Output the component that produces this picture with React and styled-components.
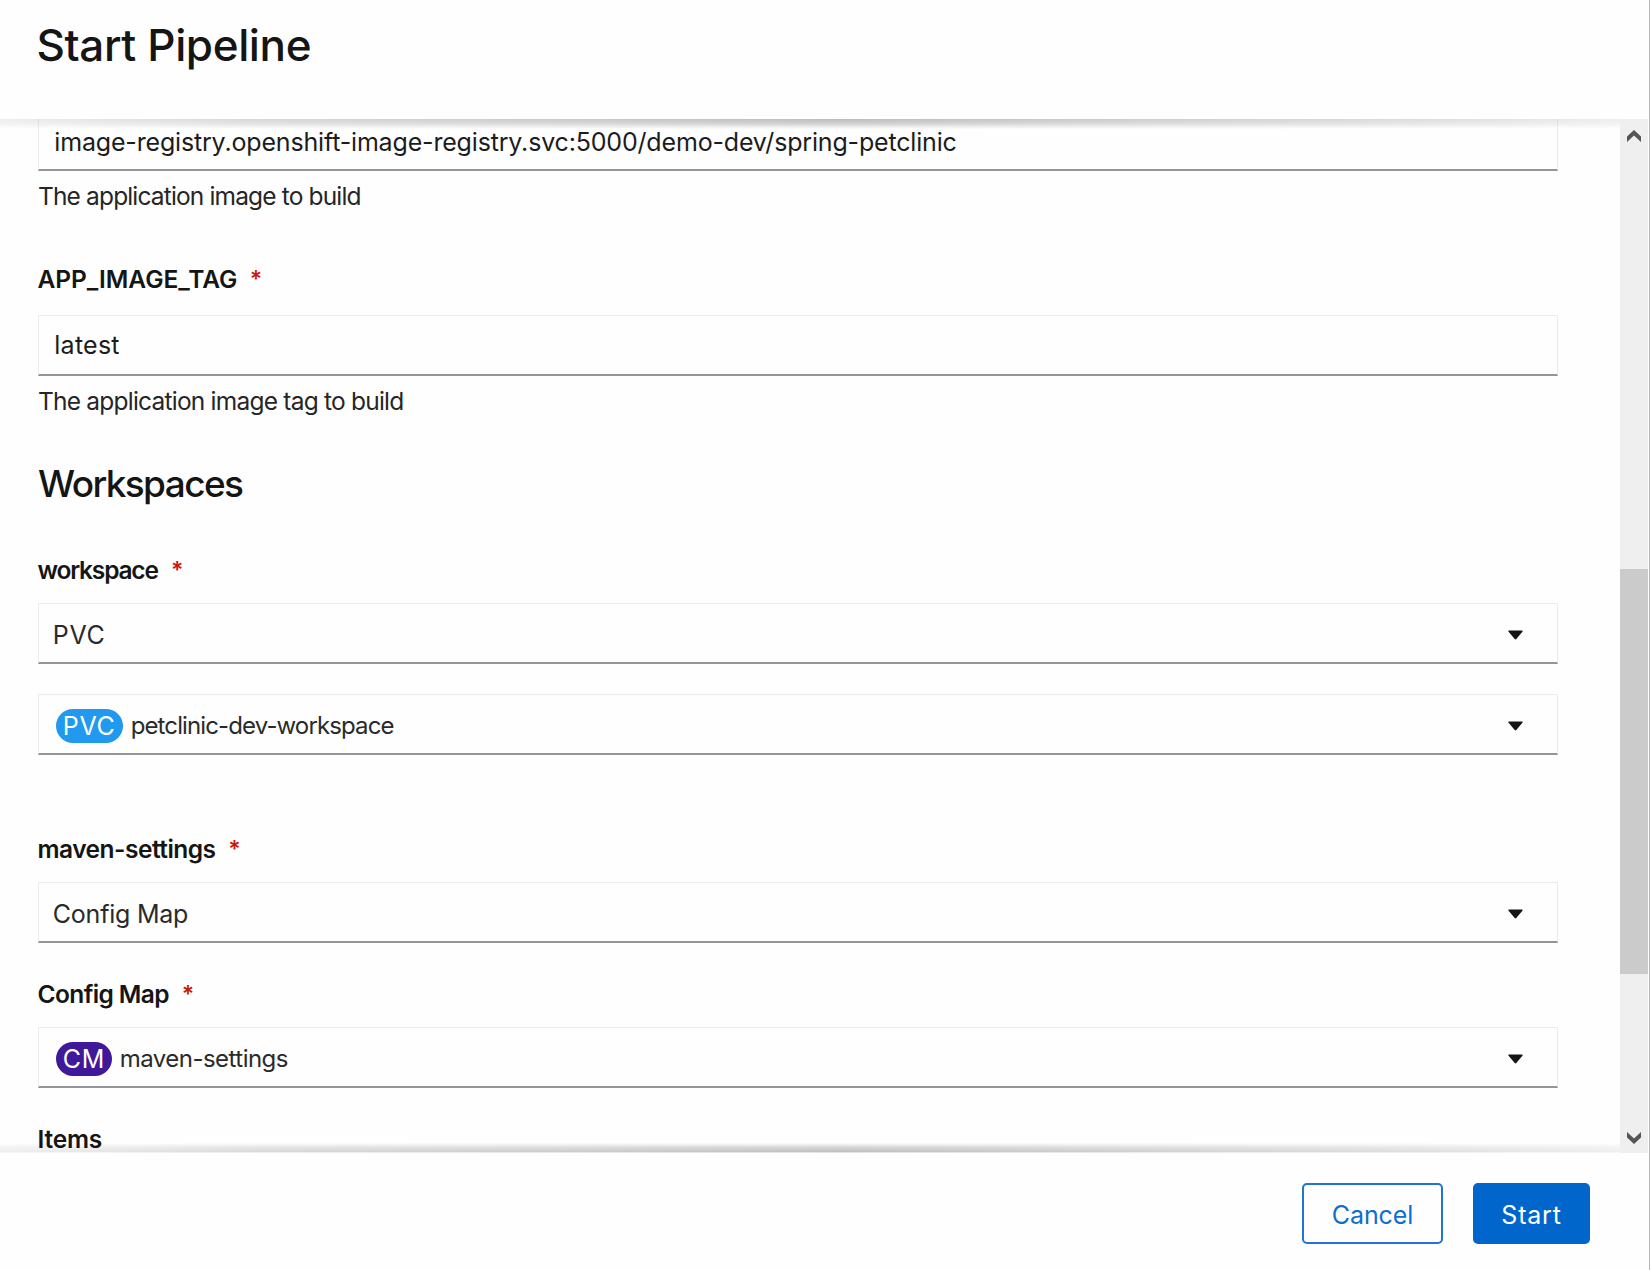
import React from "react";
import styled, { createGlobalStyle, css } from "styled-components";

const GlobalStyle = createGlobalStyle`
  * { box-sizing: border-box; }
  body {
    margin: 0;
    background: #fefefe;
    color: #151515;
    font-family: Inter, "Liberation Sans", sans-serif;
    overflow: hidden;
  }
`;

const Dialog = styled.div`
  display: flex;
  flex-direction: column;
  width: 1650px;
  height: 1270px;
  background: #fefefe;
  border-right: 1px solid #b9b9b9;
`;

const Header = styled.header`
  flex: none;
  height: 119px;
  padding: 15px 0 0 36.5px;
`;

const Title = styled.h1`
  margin: 0;
  font-size: 44px;
  line-height: 60px;
  font-weight: 500;
  letter-spacing: -0.38px;
`;

const Body = styled.div`
  position: relative;
  flex: none;
  display: flex;
  height: 1034px;
  overflow: hidden;
`;

const EdgeShadow = styled.div`
  position: absolute;
  left: 0;
  width: 1620px;
  height: 10px;
  pointer-events: none;
  mask-image: linear-gradient(
    to right,
    rgba(0, 0, 0, 0.25),
    rgba(0, 0, 0, 0.6) 16%,
    #000 52%,
    rgba(0, 0, 0, 0.5) 88%,
    rgba(0, 0, 0, 0.25)
  );
  ${(p) =>
    p.$edge === "top"
      ? css`
          top: 0;
          background: linear-gradient(to bottom, rgba(0, 0, 0, 0.26), rgba(0, 0, 0, 0.18) 45%, transparent);
        `
      : css`
          bottom: 0;
          background: linear-gradient(to top, rgba(0, 0, 0, 0.1) 1px, rgba(0, 0, 0, 0.25) 1px, rgba(0, 0, 0, 0.15) 60%, transparent);
        `}
`;

const Form = styled.form`
  flex: none;
  display: flex;
  flex-direction: column;
  width: 1620px;
  padding: 0 62.5px 0 38px;
`;

const Control = styled.div`
  flex: none;
  display: flex;
  align-items: center;
  height: ${(p) => p.$height || 61}px;
  margin-top: ${(p) => p.$gap}px;
  padding: ${(p) => p.$drop || 0}px 33.5px 0 ${(p) => p.$inset}px;
  border: 1px solid #ececec;
  border-bottom: 2px solid #949599;
  background: #fefefe;
`;

const Value = styled.span`
  flex: 1;
  font-size: ${(p) => p.$size || 25}px;
  line-height: 38px;
  letter-spacing: ${(p) => p.$track || 0}px;
  white-space: nowrap;
  color: ${(p) => p.$color || "#1c1c1c"};
`;

const Helper = styled.div`
  flex: none;
  margin-top: 6px;
  height: 38px;
  font-size: 24.5px;
  line-height: 38px;
  letter-spacing: ${(p) => p.$track}px;
  color: #262626;
`;

const LabelRow = styled.label`
  flex: none;
  display: flex;
  height: 38px;
  margin-top: ${(p) => p.$gap}px;
  margin-left: -0.5px;
  font-size: 24.5px;
  line-height: 38px;
  font-weight: 600;
  letter-spacing: ${(p) => p.$track || 0}px;
`;

const Required = styled.span`
  margin-left: ${(p) => 12.2 - p.$track}px;
  color: #c9190b;
  font-size: 23px;
  letter-spacing: 0;
`;

const SectionTitle = styled.h2`
  flex: none;
  margin: 38px 0 0;
  height: 50px;
  font-size: 37px;
  line-height: 51px;
  font-weight: 500;
  letter-spacing: -1.6px;
`;

const Badge = styled.span`
  flex: none;
  width: ${(p) => p.$width}px;
  height: 34px;
  margin-right: 7.5px;
  padding-left: 6.6px;
  border-radius: 17px;
  background: ${(p) => p.$color};
  color: #fff;
  font-size: 25px;
  line-height: 34px;
  letter-spacing: 0.7px;
`;

const Scrollbar = styled.div`
  flex: none;
  display: flex;
  flex-direction: column;
  align-items: center;
  width: 28px;
  padding: 11px 0 9px;
  background: #efefef;
`;

const Thumb = styled.div`
  width: 28px;
  height: 405px;
  margin: 427px 0 auto;
  background: #cbcbcb;
`;

const Footer = styled.footer`
  flex: 1;
  display: flex;
  justify-content: flex-end;
  gap: 30px;
  padding: 30px 59px 0 0;
`;

const Button = styled.button`
  width: ${(p) => p.$width}px;
  height: 61px;
  padding: 3px 0 0;
  border: 2px solid ${(p) => (p.$primary ? "#0066cc" : "#1f75cf")};
  border-radius: 5px;
  background: ${(p) => (p.$primary ? "#0066cc" : "#fefefe")};
  color: ${(p) => (p.$primary ? "#fff" : "#0f6dce")};
  font-family: inherit;
  font-size: 25px;
  line-height: 38px;
  letter-spacing: ${(p) => p.$track}px;
`;

const Caret = () => (
  <svg width="15" height="10" viewBox="0 0 15 10" aria-hidden="true">
    <path d="M0.6 0.4H14.4Q15 1 14.4 1.7L8.3 9Q7.5 9.8 6.7 9L0.6 1.7Q0 1 0.6 0.4Z" fill="#151515" />
  </svg>
);

const Chevron = ({ down }) => (
  <svg width="14" height="12" viewBox="0 0 14 12" aria-hidden="true">
    <path
      d={down ? "M0 0L7 6.4L14 0V5.4L7 12L0 5.4Z" : "M0 12L7 5.6L14 12V6.6L7 0L0 6.6Z"}
      fill="#555"
    />
  </svg>
);

function Label({ text, track = 0, gap, required = true }) {
  return (
    <LabelRow $gap={gap} $track={track}>
      <span>{text}</span>
      {required && <Required $track={track}>*</Required>}
    </LabelRow>
  );
}

function TextField({ value, track, gap, height, drop }) {
  return (
    <Control $gap={gap} $height={height} $drop={drop} $inset={15.3}>
      <Value $track={track}>{value}</Value>
    </Control>
  );
}

function Select({ value, track, gap }) {
  return (
    <Control $gap={gap} $inset={13.8} $drop={4}>
      <Value $track={track} $color="#2a2a2a">{value}</Value>
      <Caret />
    </Control>
  );
}

function ResourceSelect({ kind, color, badgeWidth, value, track, gap }) {
  return (
    <Control $gap={gap} $inset={17.2} $drop={4}>
      <Badge $color={color} $width={badgeWidth}>{kind}</Badge>
      <Value $size={24} $track={track} $color="#2a2a2a">{value}</Value>
      <Caret />
    </Control>
  );
}

export default function App() {
  return (
    <>
      <GlobalStyle />
      <Dialog>
        <Header>
          <Title>Start Pipeline</Title>
        </Header>
        <Body>
          <Form>
            <TextField
              gap={-8}
              height={60}
              drop={2}
              track={-0.17}
              value="image-registry.openshift-image-registry.svc:5000/demo-dev/spring-petclinic"
            />
            <Helper $track={-0.85}>The application image to build</Helper>

            <Label text="APP_IMAGE_TAG" gap={45} track={-0.05} />
            <TextField gap={17} track={0.25} value="latest" />
            <Helper $track={-0.78}>The application image tag to build</Helper>

            <SectionTitle>Workspaces</SectionTitle>

            <Label text="workspace" track={-1.2} gap={43} />
            <Select gap={14} track={0.7} value="PVC" />
            <ResourceSelect
              gap={30}
              kind="PVC"
              color="#2199ee"
              badgeWidth={67}
              value="petclinic-dev-workspace"
              track={-0.88}
            />

            <Label text="maven-settings" track={-0.51} gap={75} />
            <Select gap={14} track={-0.23} value="Config Map" />

            <Label text="Config Map" track={-0.6} gap={32} />
            <ResourceSelect
              gap={14}
              kind="CM"
              color="#40199a"
              badgeWidth={56}
              value="maven-settings"
              track={-0.52}
            />

            <Label text="Items" gap={32} track={-0.2} required={false} />
          </Form>
          <Scrollbar>
            <Chevron />
            <Thumb />
            <Chevron down />
          </Scrollbar>
          <EdgeShadow $edge="top" />
          <EdgeShadow $edge="bottom" />
        </Body>
        <Footer>
          <Button type="button" $width={141} $track={-0.1}>Cancel</Button>
          <Button type="button" $width={117} $track={0.8} $primary>Start</Button>
        </Footer>
      </Dialog>
    </>
  );
}
